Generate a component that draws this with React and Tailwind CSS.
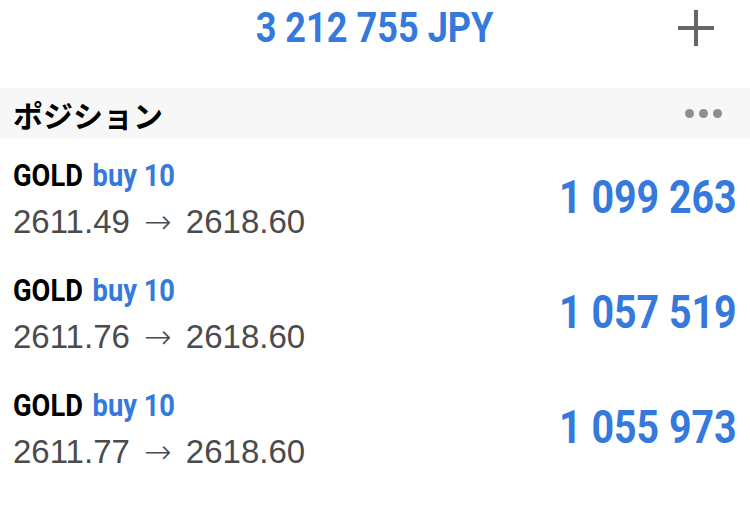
const positions = [
  { symbol: 'GOLD', side: 'buy 10', open: '2611.49', current: '2618.60', profit: '1 099 263' },
  { symbol: 'GOLD', side: 'buy 10', open: '2611.76', current: '2618.60', profit: '1 057 519' },
  { symbol: 'GOLD', side: 'buy 10', open: '2611.77', current: '2618.60', profit: '1 055 973' },
];

function PositionRow({ item }) {
  return (
    <div className="flex items-center justify-between h-[115px] pl-[13px] pr-[13px]">
      <div className="flex flex-col self-start pt-[20px]">
        <div className="inline-block origin-left scale-x-[0.88] whitespace-nowrap text-[31px] leading-[34px] font-bold font-['Roboto',sans-serif]">
          <span className="text-black">{item.symbol}</span>
          <span className="ml-[11px] text-[#3679dc]">{item.side}</span>
        </div>
        <div className="mt-[10px] whitespace-nowrap text-[33px] leading-[38px] text-[#4b4b4d] font-['Liberation_Sans','Arial',sans-serif]">
          {item.open}{' '}
          <span className="mx-[5px] font-['DejaVu_Sans',sans-serif] font-extralight">→</span>{' '}
          {item.current}
        </div>
      </div>
      <div className="inline-block origin-right scale-x-[0.855] whitespace-nowrap text-[46px] leading-[46px] font-bold text-[#3679dc] font-['Roboto',sans-serif]">
        {item.profit}
      </div>
    </div>
  );
}

export default function App() {
  return (
    <div className="w-[750px] h-[515px] bg-white overflow-hidden">
      <div className="relative flex items-center justify-center h-[55px]">
        <span className="inline-block origin-center scale-x-[0.84] whitespace-nowrap text-[43px] leading-[43px] font-bold text-[#3679dc] font-['Roboto',sans-serif]">
          3 212 755 JPY
        </span>
        <svg className="absolute right-[36px] top-[10px]" width="36" height="36" viewBox="0 0 36 36">
          <path d="M18 0v36M0 18h36" stroke="#666" strokeWidth="4" />
        </svg>
      </div>
      <div className="h-[33px]" />
      <div className="flex items-center justify-between h-[51px] bg-[#f7f7f7] pl-[13px] pr-[28px]">
        <span className="text-[30px] leading-[36px] font-bold text-black font-['Noto_Sans_CJK_JP',sans-serif]">ポジション</span>
        <div className="flex gap-[5px]">
          <span className="w-[9px] h-[9px] rounded-full bg-[#8e8e8e]" />
          <span className="w-[9px] h-[9px] rounded-full bg-[#8e8e8e]" />
          <span className="w-[9px] h-[9px] rounded-full bg-[#8e8e8e]" />
        </div>
      </div>
      {positions.map((item, i) => (
        <PositionRow key={i} item={item} />
      ))}
    </div>
  );
}
